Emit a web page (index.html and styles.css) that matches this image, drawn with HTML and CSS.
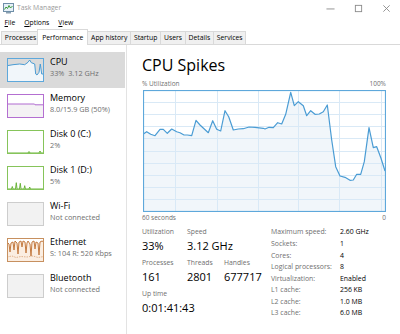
FILE: index.html
```html
<!DOCTYPE html>
<html lang="en">
<head>
<meta charset="utf-8">
<title>Task Manager</title>
<link rel="stylesheet" href="styles.css">
</head>
<body>
<div class="window">
  <div class="titlebar">
    <svg class="app-icon" viewBox="0 0 11 11" width="11" height="11">
      <rect x="0.5" y="0.5" width="10" height="8" fill="#e6f0f8" stroke="#6f8fa8"/>
      <polyline points="1.5,6.5 3,4 4.5,5.5 6,2.5 7.5,5 9.5,3" fill="none" stroke="#3a9a3a" stroke-width="1"/>
      <rect x="3" y="9" width="5" height="1.5" fill="#8aa0b2"/>
    </svg>
    <span class="title">Task Manager</span>
    <div class="controls">
      <span class="ctl"><svg viewBox="0 0 10 10" width="10" height="10"><line x1="0.5" y1="5.5" x2="9.5" y2="5.5" stroke="#8a8a8a"/></svg></span>
      <span class="ctl"><svg viewBox="0 0 10 10" width="10" height="10"><rect x="1.5" y="1.5" width="7" height="7" fill="none" stroke="#8a8a8a"/></svg></span>
      <span class="ctl"><svg viewBox="0 0 10 10" width="10" height="10"><path d="M1.5 1.5 L8.5 8.5 M8.5 1.5 L1.5 8.5" stroke="#8a8a8a" fill="none"/></svg></span>
    </div>
  </div>
  <div class="menubar">
    <span class="menu"><u>F</u>ile</span>
    <span class="menu"><u>O</u>ptions</span>
    <span class="menu"><u>V</u>iew</span>
  </div>
  <div class="tabs">
    <span class="tab">Processes</span>
    <span class="tab active">Performance</span>
    <span class="tab">App history</span>
    <span class="tab">Startup</span>
    <span class="tab">Users</span>
    <span class="tab">Details</span>
    <span class="tab">Services</span>
  </div>
  <div class="content">
    <aside class="sidebar">
      <div class="item selected">
        <svg class="thumb" viewBox="0 0 37 24">
          <polygon points="0,7.7 6,6.7 12.7,6 17.7,6.7 21,4.3 22.7,2 24.3,4.7 26,5.3 27.7,6 28.7,16 30,17 32,14.3 33.3,6 34.7,16 37,16 37,24 0,24" fill="#f1f6fa"/>
          <polyline points="0,7.7 6,6.7 12.7,6 17.7,6.7 21,4.3 22.7,2 24.3,4.7 26,5.3 27.7,6 28.7,16 30,17 32,14.3 33.3,6 34.7,16 37,16" fill="none" stroke="#4a9cd4" stroke-width="1"/>
          <rect x="0.5" y="0.5" width="36" height="23" fill="none" stroke="#5ea8db"/>
        </svg>
        <div class="info"><div class="name">CPU</div><div class="sub">33%&nbsp; 3.12 GHz</div></div>
      </div>
      <div class="item">
        <svg class="thumb" viewBox="0 0 37 24">
          <polygon points="0,10 27.5,10 28,10.8 37,10.8 37,24 0,24" fill="#f4f2f4"/>
          <polyline points="0,10 27.5,10 28,10.8 37,10.8" fill="none" stroke="#b06ad0" stroke-width="1"/>
          <rect x="0.5" y="0.5" width="36" height="23" fill="none" stroke="#b46fd1"/>
        </svg>
        <div class="info"><div class="name">Memory</div><div class="sub">8.0/15.9 GB (50%)</div></div>
      </div>
      <div class="item">
        <svg class="thumb" viewBox="0 0 37 24">
          <polyline points="0,23 21,23 22,21.5 23,23 32,23 33,21 34,23 37,23" fill="none" stroke="#6ab43a" stroke-width="1"/>
          <rect x="0.5" y="0.5" width="36" height="23" fill="none" stroke="#86c45a"/>
        </svg>
        <div class="info"><div class="name">Disk 0 (C:)</div><div class="sub">2%</div></div>
      </div>
      <div class="item">
        <svg class="thumb" viewBox="0 0 37 24">
          <polygon points="0,23 4.5,23 5.3,20.5 6,23 8.5,23 9.3,16.7 10,23 12.5,23 13.3,17.3 14,23 17,23 17.7,19.7 18.4,23 22,23 22.7,21 23.4,23 37,23 37,24 0,24" fill="#eff7e8"/>
          <polyline points="0,23 4.5,23 5.3,20.5 6,23 8.5,23 9.3,16.7 10,23 12.5,23 13.3,17.3 14,23 17,23 17.7,19.7 18.4,23 22,23 22.7,21 23.4,23 37,23" fill="none" stroke="#6ab43a" stroke-width="1"/>
          <rect x="0.5" y="0.5" width="36" height="23" fill="none" stroke="#86c45a"/>
        </svg>
        <div class="info"><div class="name">Disk 1 (D:)</div><div class="sub">5%</div></div>
      </div>
      <div class="item">
        <svg class="thumb" viewBox="0 0 37 24">
          <rect x="0.5" y="0.5" width="36" height="23" fill="#f2f2f2" stroke="#cdcdcd"/>
        </svg>
        <div class="info"><div class="name">Wi-Fi</div><div class="sub">Not connected</div></div>
      </div>
      <div class="item">
        <svg class="thumb" viewBox="0 0 37 24">
          <polygon points="0,4 2,6 3,14 4,5 6,4 7,12 8,3 10,5 11,16 12,4 14,3 15,9 16,3 18,4 19,15 20,5 21,3 23,6 24,18 25,4 27,3 28,11 29,4 31,5 32,17 33,4 35,3 37,4 37,24 0,24" fill="#fbeee2"/>
          <polyline points="0,4 2,6 3,14 4,5 6,4 7,12 8,3 10,5 11,16 12,4 14,3 15,9 16,3 18,4 19,15 20,5 21,3 23,6 24,18 25,4 27,3 28,11 29,4 31,5 32,17 33,4 35,3 37,4" fill="none" stroke="#c47a40" stroke-width="1"/>
          <polyline points="0,19 5,18 9,19.5 14,18.5 20,19 26,18 31,19.5 37,18.5" fill="none" stroke="#d9a57a" stroke-width="0.8" stroke-dasharray="1.5 1"/>
          <rect x="0.5" y="0.5" width="36" height="23" fill="none" stroke="#c7905f"/>
        </svg>
        <div class="info"><div class="name">Ethernet</div><div class="sub">S: 104 R: 520 Kbps</div></div>
      </div>
      <div class="item">
        <svg class="thumb" viewBox="0 0 37 24">
          <rect x="0.5" y="0.5" width="36" height="23" fill="#f2f2f2" stroke="#cdcdcd"/>
        </svg>
        <div class="info"><div class="name">Bluetooth</div><div class="sub">Not connected</div></div>
      </div>
    </aside>
    <main class="panel">
      <h1 class="heading">CPU Spikes</h1>
      <div class="axis axis-top"><span>% Utilization</span><span>100%</span></div>
      <svg class="graph" viewBox="0 0 243 122">
        <polygon points="0,44.3 3.7,41.7 7.7,44.3 12,45.7 17,39.3 20.3,39.3 24.3,43.3 28.7,39 33.7,41.7 37,42.7 41,45 44.3,45 48.7,45.7 53,30.3 57,35 65.3,42.7 69.7,30.7 73.7,39.3 77.7,41 82,20.7 85.7,26.7 90.3,40 95.3,39 100.3,38.7 106,37 112,37.3 120.3,38.3 122,39 126,37.3 130.3,37.7 134.7,32.7 138.7,34 142.7,24.3 147.7,2.3 151.3,15.7 155.3,11.7 160.3,15.7 163.7,25.7 167.7,20.7 172,24.3 176.3,24 180.3,21.7 184.3,15 188.7,50 192.7,76.7 197,86 202,87.3 207,90.3 210.3,90 213.7,84.3 217.7,84.3 221.3,71.7 226,37.7 230.3,57.7 233.7,56.7 238,68.3 242,81 242,121 0,121" fill="#f1f6fa"/>
        <path d="M0 12.5 H243 M0 24.5 H243 M0 36.5 H243 M0 48.5 H243 M0 61.5 H243 M0 73.5 H243 M0 85.5 H243 M0 97.5 H243 M0 109.5 H243 M32.5 0 V122 M74.5 0 V122 M115.5 0 V122 M155.5 0 V122 M196.5 0 V122 M238.5 0 V122" stroke="#d9e9f6" stroke-width="1" fill="none"/>
        <polyline points="0,44.3 3.7,41.7 7.7,44.3 12,45.7 17,39.3 20.3,39.3 24.3,43.3 28.7,39 33.7,41.7 37,42.7 41,45 44.3,45 48.7,45.7 53,30.3 57,35 65.3,42.7 69.7,30.7 73.7,39.3 77.7,41 82,20.7 85.7,26.7 90.3,40 95.3,39 100.3,38.7 106,37 112,37.3 120.3,38.3 122,39 126,37.3 130.3,37.7 134.7,32.7 138.7,34 142.7,24.3 147.7,2.3 151.3,15.7 155.3,11.7 160.3,15.7 163.7,25.7 167.7,20.7 172,24.3 176.3,24 180.3,21.7 184.3,15 188.7,50 192.7,76.7 197,86 202,87.3 207,90.3 210.3,90 213.7,84.3 217.7,84.3 221.3,71.7 226,37.7 230.3,57.7 233.7,56.7 238,68.3 242,81" fill="none" stroke="#4a9cd4" stroke-width="1.2" stroke-linejoin="round"/>
        <rect x="0.5" y="0.5" width="242" height="121" fill="none" stroke="#5ea8db" stroke-width="1.2"/>
      </svg>
      <div class="axis axis-bottom"><span>60 seconds</span><span>0</span></div>
      <div class="stats">
        <div class="stats-left">
          <div class="stat-row">
            <div class="stat w1"><div class="label">Utilization</div><div class="value">33%</div></div>
            <div class="stat"><div class="label">Speed</div><div class="value">3.12 GHz</div></div>
          </div>
          <div class="stat-row">
            <div class="stat w1"><div class="label">Processes</div><div class="value">161</div></div>
            <div class="stat w2"><div class="label">Threads</div><div class="value">2801</div></div>
            <div class="stat"><div class="label">Handles</div><div class="value">677717</div></div>
          </div>
          <div class="stat-row">
            <div class="stat"><div class="label">Up time</div><div class="value">0:01:41:43</div></div>
          </div>
        </div>
        <table class="specs">
          <tr><td class="k">Maximum speed:</td><td>2.60 GHz</td></tr>
          <tr><td class="k">Sockets:</td><td>1</td></tr>
          <tr><td class="k">Cores:</td><td>4</td></tr>
          <tr><td class="k">Logical processors:</td><td>8</td></tr>
          <tr><td class="k">Virtualization:</td><td>Enabled</td></tr>
          <tr><td class="k">L1 cache:</td><td>256 KB</td></tr>
          <tr><td class="k">L2 cache:</td><td>1.0 MB</td></tr>
          <tr><td class="k">L3 cache:</td><td>6.0 MB</td></tr>
        </table>
      </div>
    </main>
  </div>
</div>
</body>
</html>
```
FILE: styles.css
```css
* { box-sizing: border-box; }
html, body { margin: 0; padding: 0; }
body {
  width: 400px;
  height: 334px;
  overflow: hidden;
  background: #fff;
  font-family: "Open Sans", "Noto Sans", sans-serif;
  color: #000;
}
.window { width: 400px; height: 334px; display: flex; flex-direction: column; }

.titlebar {
  height: 16px;
  display: flex;
  align-items: center;
  padding-left: 3px;
}
.app-icon { display: block; width: 11px; height: 11px; margin-right: 3px; }
.title { font-size: 6.8px; color: #9a9a9a; line-height: 16px; }
.controls { margin-left: auto; display: flex; height: 16px; }
.ctl { width: 28px; height: 16px; display: flex; align-items: center; justify-content: center; }
.ctl svg { display: block; width: 9px; height: 9px; }

.menubar {
  height: 13px;
  display: flex;
  align-items: center;
  font-size: 6.8px;
}
.menu { padding: 0 4.5px; line-height: 13px; }
.menu u { text-decoration-thickness: 0.6px; text-underline-offset: 1px; }

.tabs {
  height: 16px;
  display: flex;
  align-items: flex-end;
  padding-left: 1px;
  border-bottom: 1px solid #d9d9d9;
  font-size: 6.8px;
}
.tab {
  height: 13px;
  line-height: 12px;
  padding: 0 2.8px;
  border: 1px solid #d9d9d9;
  border-bottom: none;
  margin-right: -1px;
  background: #f0f0f0;
  white-space: nowrap;
}
.tab.active {
  height: 16px;
  line-height: 15px;
  margin: 0 -1px -1px -2px;
  padding: 0 4px;
  background: #fff;
  z-index: 1;
}

.content { flex: 1; display: flex; min-height: 0; }

.sidebar {
  width: 127px;
  padding: 7px 1px 0 0;
  border-right: 1px solid #e3e3e3;
}
.item {
  height: 36px;
  display: flex;
  align-items: flex-start;
  padding: 5.5px 0 0 7px;
}
.item.selected { background: #dadada; }
.thumb { display: block; width: 37px; height: 24px; flex: none; margin-right: 6px; }
.info { margin-top: -2px; }
.name { font-size: 9px; line-height: 11px; white-space: nowrap; }
.sub { font-size: 7.3px; line-height: 10px; color: #6f6f6f; white-space: nowrap; margin-top: 1px; }

.panel {
  flex: 1;
  padding: 10px 14px 0 15px;
  min-width: 0;
}
.heading {
  margin: 0;
  font-size: 16px;
  line-height: 20px;
  font-weight: normal;
}
.axis {
  display: flex;
  justify-content: space-between;
  font-size: 6.5px;
  line-height: 9px;
  color: #6f6f6f;
}
.axis-top { margin-top: 4px; }
.graph { display: block; width: 243px; height: 122px; margin: 2px 0 0 1px; }
.axis-bottom { margin-top: 1px; }

.stats { display: flex; margin-top: 5px; }
.stats-left { width: 129px; flex: none; }
.stat-row { display: flex; margin-bottom: 4.5px; }
.stat.w1 { width: 45px; }
.stat.w2 { width: 37px; }
.label { font-size: 6.8px; line-height: 9px; color: #6f6f6f; white-space: nowrap; }
.value { font-size: 11px; line-height: 14px; margin-top: 3.3px; white-space: nowrap; }

.specs {
  border-collapse: collapse;
  font-size: 6.9px;
  line-height: 10.7px;
}
.specs td { padding: 0; white-space: nowrap; }
.specs td.k { width: 69px; color: #6f6f6f; }
```
